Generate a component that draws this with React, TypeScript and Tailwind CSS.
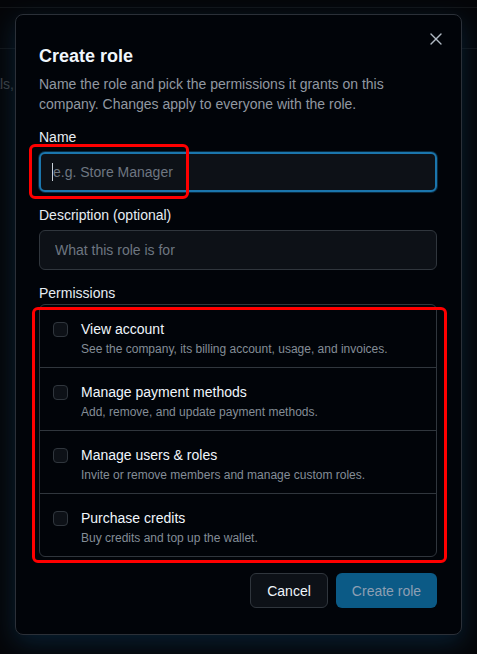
import React from 'react'
import { X } from 'lucide-react'

interface Permission {
  title: string
  description: string
}

const permissions: Permission[] = [
  {
    title: 'View account',
    description: 'See the company, its billing account, usage, and invoices.',
  },
  {
    title: 'Manage payment methods',
    description: 'Add, remove, and update payment methods.',
  },
  {
    title: 'Manage users & roles',
    description: 'Invite or remove members and manage custom roles.',
  },
  {
    title: 'Purchase credits',
    description: 'Buy credits and top up the wallet.',
  },
]

const PermissionRow = ({ title, description }: Permission) => (
  <label className="flex items-start gap-[13px] pb-[10px] pl-[13px] pr-3 pt-[14px]">
    <span className="mt-[3px] block size-[15px] shrink-0 rounded-[4px] border border-[#30363d] bg-[#0d1117]" />
    <span className="flex flex-col">
      <span className="text-sm leading-5 text-[#f0f6fc]">{title}</span>
      <span className="mt-0.5 text-xs leading-4 text-[#848d97]">
        {description}
      </span>
    </span>
  </label>
)

export default function App() {
  return (
    <div className="relative h-[654px] w-[477px] overflow-hidden bg-[#0d1117] font-['Liberation_Sans',Arial,sans-serif]">
      {/* page behind the dialog */}
      <div className="pt-[7px]">
        <div className="h-[42px] border-y border-[#30363d]" />
        <div className="mt-[25px] flex w-[14px] justify-end overflow-hidden whitespace-nowrap text-sm leading-5 text-[#a1a8b1]">
          Manage members, roles and credentials,
        </div>
      </div>

      {/* backdrop */}
      <div className="absolute inset-0 bg-black/60" />

      <div className="absolute inset-0 flex justify-center pt-[14px]">
        <div
          role="dialog"
          className="relative h-fit w-[447px] rounded-[8px] border border-[#2b3038] bg-[#010409] pb-[26px] pl-[23px] pr-6 pt-[27px] shadow-[0_8px_24px_rgba(10,45,70,0.65)]"
        >
          <button className="absolute right-[15px] top-[14px] text-[#b1bac4]">
            <X size={20} strokeWidth={1.6} />
          </button>

          <h2 className="text-[18px] font-bold leading-7 text-[#f0f6fc]">
            Create role
          </h2>
          <p className="mt-1 text-sm leading-5 text-[#9198a1]">
            Name the role and pick the permissions it grants on this company.
            Changes apply to everyone with the role.
          </p>

          <div className="mb-[5px] mt-[13px] text-sm leading-5 text-[#e6edf3]">
            Name
          </div>
          <div className="relative">
            <input
              readOnly
              placeholder="e.g. Store Manager"
              className="h-10 w-full rounded-[6px] border-2 border-[#1b76ad] bg-[#0d1117] px-3 text-sm text-[#e6edf3] shadow-[0_0_0_1px_rgba(27,118,173,0.35)] outline-none placeholder:text-[#6e7681]"
            />
            <span className="absolute left-[13px] top-[11px] h-[18px] w-px bg-[#c9d1d9]" />
          </div>

          <div className="mb-[5px] mt-[13px] text-sm leading-5 text-[#e6edf3]">
            Description (optional)
          </div>
          <input
            readOnly
            placeholder="What this role is for"
            className="h-10 w-full rounded-[6px] border border-[#30363d] bg-[#0d1117] px-[15px] text-sm text-[#e6edf3] outline-none placeholder:text-[#6e7681]"
          />

          <div className="mb-px mt-[13px] text-sm leading-5 text-[#e6edf3]">
            Permissions
          </div>
          <div className="divide-y divide-[#30363d] rounded-[6px] border border-[#30363d]">
            {permissions.map((p) => (
              <PermissionRow key={p.title} {...p} />
            ))}
          </div>

          <div className="mt-4 flex justify-end gap-2">
            <button className="h-[35px] w-[78px] rounded-[6px] border border-[#30363d] bg-[#0d1117] text-sm font-medium text-[#f0f6fc]">
              Cancel
            </button>
            <button className="h-[35px] w-[101px] rounded-[6px] bg-[#0b5a86] text-sm font-medium text-[#8d9fb3]">
              Create role
            </button>
          </div>
        </div>
      </div>

      {/* highlight marks */}
      <div className="absolute left-[29px] top-[144px] h-[55px] w-[160px] rounded-[6px] border-[3px] border-[#ff0000]" />
      <div className="absolute left-[32px] top-[307px] h-[256px] w-[415px] rounded-[6px] border-[3px] border-[#ff0000]" />
    </div>
  )
}
